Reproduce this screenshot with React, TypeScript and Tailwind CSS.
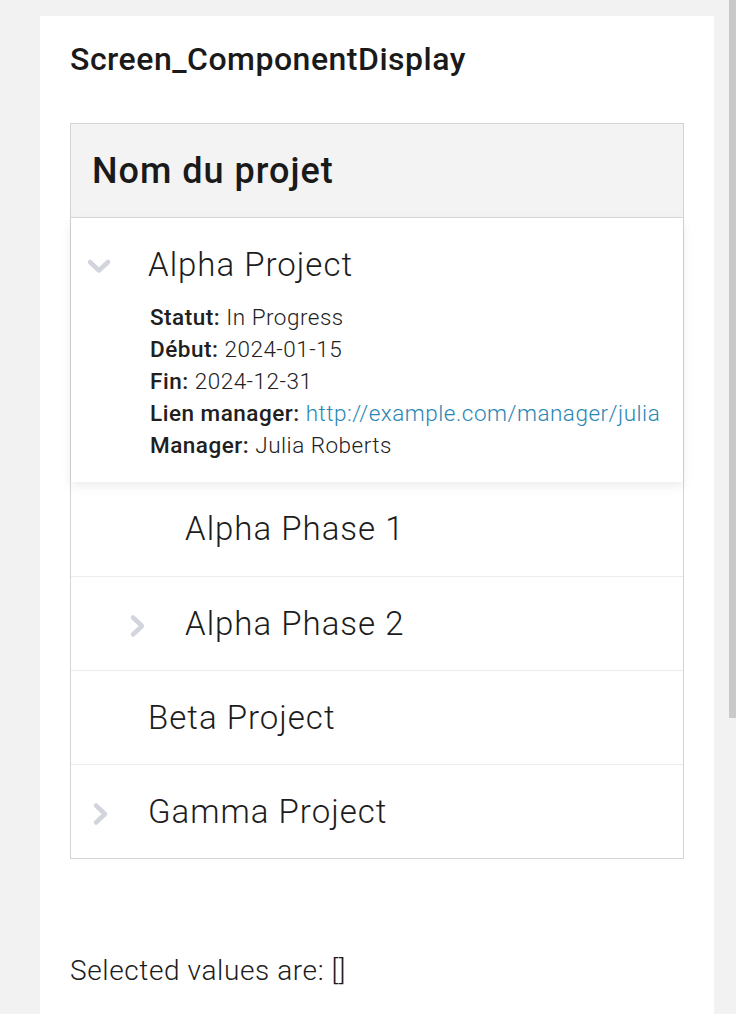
import React from "react";

const font = { fontFamily: "Roboto, 'Noto Sans', sans-serif" };

function ChevronRight() {
  return (
    <svg width="18" height="26" viewBox="0 0 18 26" className="text-[#d3d5dc]">
      <path d="M4 4.5l9 8.5-9 8.5" fill="none" stroke="currentColor" strokeWidth="4.5" strokeLinecap="round" strokeLinejoin="round" />
    </svg>
  );
}

function ChevronDown() {
  return (
    <svg width="26" height="18" viewBox="0 0 26 18" className="text-[#d3d5dc]">
      <path d="M4 4l9 8.5 9-8.5" fill="none" stroke="currentColor" strokeWidth="4.5" strokeLinecap="round" strokeLinejoin="round" />
    </svg>
  );
}

function Detail({ label, children }: { label: string; children: React.ReactNode }) {
  return (
    <div className="leading-[32px]">
      <span className="font-medium text-[#202020]">{label}:</span>{" "}
      <span className="font-light text-[#222]">{children}</span>
    </div>
  );
}

function Row({ title, indent, chevron }: { title: string; indent: boolean; chevron: boolean }) {
  return (
    <div className="h-[94px] flex items-center border-t border-[#ececec]">
      <div className={indent ? "w-[114px] flex justify-end pr-[38px] pt-1" : "w-[77px] flex justify-end pr-[38px] pt-1"}>
        {chevron ? <ChevronRight /> : null}
      </div>
      <span className="text-[33px] font-light text-[#1c1c1c] tracking-[1px]">{title}</span>
    </div>
  );
}

export default function App() {
  return (
    <main className="min-h-[1014px] bg-[#f2f2f2] pt-4 pl-10 pr-[22px] relative" style={font}>
      <div className="bg-white min-h-[998px] px-[30px] pt-[23px]">
        <h1 className="text-[32px] font-medium text-[#1a1a1a] leading-[40px] tracking-[0.5px]">Screen_ComponentDisplay</h1>

        <div className="mt-[44px] border border-[#d4d4d4]">
          <div className="h-[94px] bg-[#f3f3f3] border-b border-[#d8d8d8] flex items-center pl-[21px]">
            <span className="text-[36px] font-medium text-[#1a1a1a] tracking-[1px]">Nom du projet</span>
          </div>

          <div className="relative z-10 bg-white shadow-[0_4px_10px_rgba(0,0,0,0.08)] pb-[21px]">
            <div className="h-[94px] flex items-center">
              <div className="w-[77px] flex justify-end pr-[36px] pt-1">
                <ChevronDown />
              </div>
              <span className="text-[33px] font-light text-[#1c1c1c] tracking-[1px]">Alpha Project</span>
            </div>
            <div className="-mt-[11px] pl-[79px] text-[22.5px] tracking-[0.5px]">
              <Detail label="Statut">In Progress</Detail>
              <Detail label="Début">2024-01-15</Detail>
              <Detail label="Fin">2024-12-31</Detail>
              <Detail label="Lien manager">
                <a className="text-[#2a86b3]" href="#">http://example.com/manager/julia</a>
              </Detail>
              <Detail label="Manager">Julia Roberts</Detail>
            </div>
          </div>

          <div className="[&>div:first-child]:border-t-0">
            <Row title="Alpha Phase 1" indent chevron={false} />
            <Row title="Alpha Phase 2" indent chevron />
            <Row title="Beta Project" indent={false} chevron={false} />
            <Row title="Gamma Project" indent={false} chevron />
          </div>
        </div>

        <p className="mt-[91px] text-[28px] font-light text-[#1c1c1c] tracking-[0.6px]">Selected values are: []</p>
      </div>

      <div className="absolute top-0 right-0 w-[7px] h-[718px] bg-[#c9c9c9]" />
    </main>
  );
}
